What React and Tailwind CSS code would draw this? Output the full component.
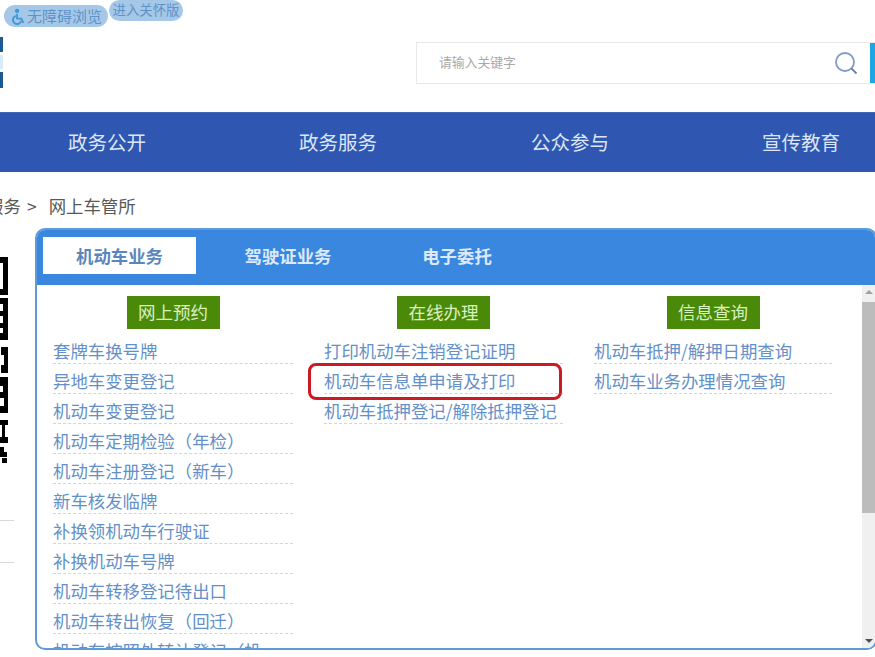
const font = { fontFamily: '"Noto Sans CJK SC", sans-serif' };

function Item({ children }) {
  return (
    <li className="h-[30px] border-b border-dashed border-[#d4d4d4] text-[17.4px] leading-[33px] text-[#6490c8] whitespace-nowrap">
      {children}
    </li>
  );
}

function Column({ title, items, className }) {
  return (
    <div className={"flex flex-col " + className}>
      <div className="self-center bg-[#4b8a08] text-[#d9f0c0] text-[17.5px] leading-[31px] h-[33px] px-[11.5px] mb-[5px]">{title}</div>
      <ul>
        {items.map((t) => (
          <Item key={t}>{t}</Item>
        ))}
      </ul>
    </div>
  );
}

const col1 = ["套牌车换号牌", "异地车变更登记", "机动车变更登记", "机动车定期检验（年检）", "机动车注册登记（新车）", "新车核发临牌", "补换领机动车行驶证", "补换机动车号牌", "机动车转移登记待出口", "机动车转出恢复（回迁）", "机动车按照外转让登记（投"];
const col2 = ["打印机动车注销登记证明", "机动车信息单申请及打印", "机动车抵押登记/解除抵押登记"];
const col3 = ["机动车抵押/解押日期查询", "机动车业务办理情况查询"];

export default function App() {
  return (
    <div className="w-[875px] h-[657px] overflow-hidden bg-white relative" style={font}>
      {/* header */}
      <header className="h-[112px] flex flex-col relative">
        <div className="flex items-start pl-[4px] gap-[1px]">
          <div className="mt-[5px] h-[22px] w-[104px] rounded-full bg-[#a5c8e8] flex items-center pl-[6px] text-[15px] text-[#5f93c6] whitespace-nowrap">
            <svg width="17" height="17" viewBox="0 0 24 24" fill="none" stroke="#3d98d8" strokeWidth="2.6" className="shrink-0">
              <circle cx="10" cy="4" r="1.8" fill="#3d98d8" />
              <path d="M10 8v7h6l3 6" />
              <path d="M8 11a6 6 0 1 0 8 7" />
            </svg>
            <span>无障碍浏览</span>
          </div>
          <div className="h-[21px] w-[74px] rounded-full bg-[#a5c8e8] text-center text-[13.4px] leading-[19px] text-[#5f93c6] whitespace-nowrap">进入关怀版</div>
        </div>
        <div className="flex justify-end items-start">
          <div className="mt-[15px] w-[459px] h-[42px] border border-[#e8e8e8] border-r-0 flex items-center pl-[22px] pr-[17px] justify-between relative">
            <span className="text-[12.8px] leading-[18px] -mt-[2px] text-[#a8a8a8]">请输入关键字</span>
            <svg width="24" height="24" viewBox="0 0 24 24" fill="none" stroke="#7f9bc9" strokeWidth="1.8">
              <circle cx="11" cy="11" r="9" />
              <path d="M17.5 17.5l5 5" stroke="#6f7f9f" />
            </svg>
            <span className="absolute right-0 top-0 h-full w-[5px] bg-[#1ea5e6]" />
          </div>
        </div>
        <div className="absolute left-0 top-[37px] w-[3px] flex flex-col gap-[3px]">
          <span className="h-[15px] bg-[#1d5a92]" />
          <span className="h-[14px] bg-[#d8ebfa]" />
          <span className="h-[16px] bg-[#1d5a92]" />
        </div>
      </header>

      {/* nav */}
      <nav className="h-[60px] pb-[2px] bg-[#2f56b0] border-t border-[#3f66b8] grid grid-cols-[222px_232px_232px_189px] items-center text-[19.5px] text-[#dbe6f7]">
        <span className="pl-[68px]">政务公开</span>
        <span className="pl-[77px]">政务服务</span>
        <span className="pl-[77px]">公众参与</span>
        <span className="pl-[76px]">宣传教育</span>
      </nav>

      {/* breadcrumb */}
      <div className="h-[56px] pt-[22px] text-[17.4px] leading-[24px] text-[#595959] whitespace-nowrap flex">
        <span className="-ml-[14px] w-[35px] shrink-0">服务</span>
        <span className="ml-[6px] mr-[12px]">&gt;</span>
        <span>网上车管所</span>
      </div>

      <div className="flex items-start">
        {/* QR + left strip */}
        <div className="w-[35px] shrink-0 relative h-[420px]">
          <svg width="9" height="210" viewBox="0 0 9 210" className="absolute left-0 top-[29px]" fill="#000">
            <path d="M0 0h8v38H0v-6h3V6H0z" />
            <path d="M0 41h8v42H0v-7h3v-5H0v-5h3v-7H0v-5h3v-7H0z" />
            <path d="M1 90h7v26H1v-8h3V98H1z" />
            <path d="M0 120h8v36H0v-7h4v-8H0v-6h3v-6H0z" />
            <path d="M0 163h8v5H5v12h3v6H0v-6h2v-12H0z" />
            <path d="M0 190h4v5h3v5H0z" />
            <path d="M2 201h5v5H2z" />
          </svg>
          <div className="absolute left-0 top-[292px] w-[14px] h-px bg-[#d8d8d8]" />
          <div className="absolute left-0 top-[334px] w-[14px] h-px bg-[#d8d8d8]" />
        </div>

        {/* panel */}
        <section className="w-[842px] h-[422px] shrink-0 rounded-[10px] border-2 border-[#5f9bd8] overflow-hidden flex flex-col">
          <div className="h-[55px] shrink-0 bg-[#3a87e0] flex items-start pl-[6px] pt-[7px] text-[17.4px] font-bold">
            <div className="w-[153px] h-[37px] bg-white text-[#5b86bd] text-center leading-[37px]">机动车业务</div>
            <div className="w-[184px] h-[37px] text-[#dbe9fa] text-center leading-[37px]">驾驶证业务</div>
            <div className="w-[154px] h-[37px] text-[#dbe9fa] text-center leading-[37px]">电子委托</div>
          </div>
          <div className="flex-1 flex min-h-0">
            <div className="flex-1 min-w-0 overflow-hidden flex items-start pt-[11px] pl-[16px]">
              <Column title="网上预约" items={col1} className="w-[240px] mr-[31px] shrink-0" />
              <Column title="在线办理" items={col2} className="w-[239px] mr-[31px] shrink-0" />
              <Column title="信息查询" items={col3} className="w-[238px] shrink-0" />
            </div>
            <div className="w-[13px] shrink-0 bg-[#f0f0f0] flex flex-col items-center justify-between relative">
              <div className="absolute top-[17px] left-0 w-full h-[211px] bg-[#bcbcbc]" />
              <span className="mt-[5px] w-0 h-0 border-x-[4px] border-x-transparent border-b-[4px] border-b-[#a0a0a0]" />
              <span className="mb-[5px] w-0 h-0 border-x-[4px] border-x-transparent border-t-[4px] border-t-[#505050]" />
            </div>
          </div>
        </section>
      </div>

      {/* red annotation */}
      <div className="absolute left-[308px] top-[363px] w-[254px] h-[37px] rounded-[8px] border-[3px] border-[#cc1a22]" />
    </div>
  );
}
